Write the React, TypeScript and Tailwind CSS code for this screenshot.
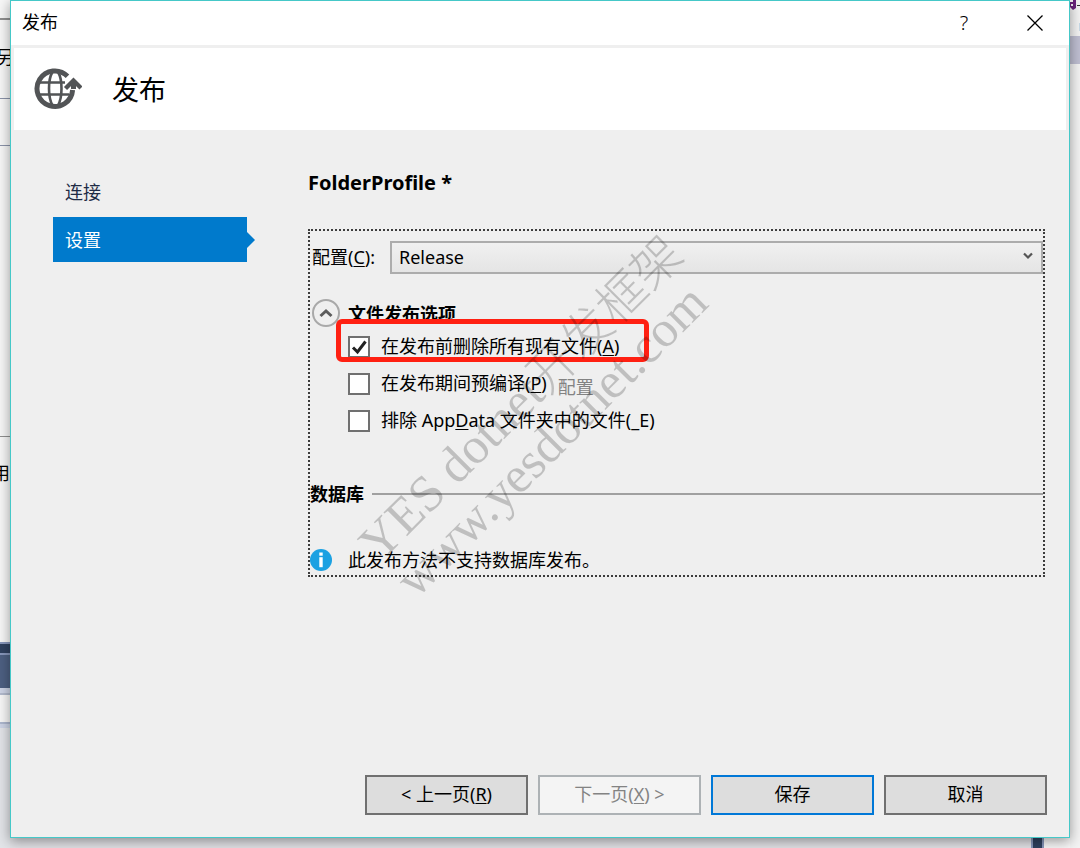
import type { ReactNode } from 'react';

const steps = [
  { label: '连接', active: false },
  { label: '设置', active: true },
];

function Key({ children }: { children: ReactNode }) {
  return <span className="underline decoration-1 underline-offset-2">{children}</span>;
}

function GlobeIcon() {
  return (
    <svg viewBox="0 0 48 42" className="w-12 h-[42px]" fill="none" stroke="#525456">
      <path d="M33.5 8.2A17.8 17.8 0 1 0 38.6 22" strokeWidth="5" />
      <path d="M18.5 4C16 8 15 14 15 20.5S16 33 18.5 37.5M24 4C26.5 8 27.5 14 27.5 20.5S26.5 33 24 37.5" strokeWidth="2.6" />
      <path d="M5 14.5H31M4 26.5H35" strokeWidth="2.6" />
      <path d="M31.5 20.5L39.5 12.5L47 20" strokeWidth="4.4" />
      <path d="M39.5 13.5V21" strokeWidth="5" />
    </svg>
  );
}

function InfoIcon() {
  return (
    <svg viewBox="0 0 22 22" className="w-[22px] h-[22px] shrink-0">
      <circle cx="11" cy="11" r="11" fill="#1ba1e2" />
      <rect x="9.3" y="3.5" width="3.4" height="3.2" fill="#fff" />
      <rect x="9.3" y="8.2" width="3.4" height="10" fill="#fff" />
    </svg>
  );
}

function CheckRow({ id, checked, children }: { id: string; checked?: boolean; children: ReactNode }) {
  return (
    <div className="flex items-center h-[37px]">
      <span className="relative flex shrink-0">
        <input
          id={id}
          type="checkbox"
          defaultChecked={checked}
          className="peer appearance-none w-[22px] h-[22px] border-2 border-[#707070] bg-white"
        />
        <svg
          viewBox="0 0 22 22"
          className="absolute inset-0 w-[22px] h-[22px] pointer-events-none invisible peer-checked:visible"
          fill="none"
          stroke="#212121"
          strokeWidth="3"
        >
          <path d="M5 11.5L9.5 16L17.5 5.5" />
        </svg>
      </span>
      <label htmlFor={id} className="pl-[11px] pb-[2px] whitespace-nowrap">
        {children}
      </label>
    </div>
  );
}

// What is visible of the editor behind the dialog
function LeftEdge() {
  return (
    <div className="w-[10px] shrink-0 overflow-hidden bg-[#f7f7f7]">
      <div className="h-[18px]" />
      <div className="h-[2px] bg-[#8f8f8f]" />
      <div className="h-[78px] flex items-center justify-end pb-1">
        <span className="shrink-0 -mr-1">另</span>
      </div>
      <div className="h-px bg-[#8b93a9]" />
      <div className="h-[46px]" />
      <div className="h-px bg-[#8b93a9]" />
      <div className="h-[290px]" />
      <div className="h-px bg-[#909090]" />
      <div className="h-[72px] flex items-center justify-end">
        <span className="shrink-0">用</span>
      </div>
      <div className="h-[133px]" />
      <div className="h-[2px] bg-[#8797bb]" />
      <div className="h-[9px] bg-[#2f415f]" />
      <div className="h-[2px] bg-[#8797bb]" />
      <div className="h-[33px] bg-[#4d6082]" />
      <div className="h-[5px] bg-[#cdd4e6]" />
      <div className="h-[2px] bg-[#b2bacd]" />
      <div className="h-[27px]" />
      <div className="h-[2px] bg-[#adb7ce]" />
      <div className="h-1 bg-[#cdd4e6]" />
      <div className="h-[120px] bg-[#e2e4e8]" />
    </div>
  );
}

function RightEdge() {
  return (
    <div className="w-[10px] shrink-0 overflow-hidden bg-[#f3f3f3]">
      <div className="h-9">
        <svg viewBox="0 0 10 36" className="w-[10px] h-9">
          <path d="M0 2H3V0H6V8L3 10L0 7Z" fill="#68217a" />
          <path d="M1 4H3V6H1Z" fill="#f3f3f3" />
          <path d="M7 5H10V6H7Z" fill="#333" />
          <path d="M9 23H10V31H9Z" fill="#c8dbe8" />
        </svg>
      </div>
      <div className="h-7 bg-[#bfbfd2]" />
    </div>
  );
}

const button = 'w-[163px] h-10 pb-[2px] border-2 text-center';

export default function App() {
  return (
    <div className="min-h-screen flex overflow-hidden text-lg leading-6 text-black font-['Noto_Sans','Noto_Sans_CJK_SC',sans-serif]">
      <LeftEdge />

      <div className="relative z-10 flex-1 min-w-0 flex flex-col">
        <div className="flex-1 flex flex-col bg-[#efefef] border border-[#45c8c8] shadow-[0_3px_12px_rgba(0,0,0,0.4)] z-10">
          <header className="h-11 flex items-center bg-white pl-[11px] pr-6">
            <span className="flex-1 pb-[2px]">发布</span>
            <button type="button" aria-label="帮助" className="w-8 mr-[45px] text-xl font-light">
              ?
            </button>
            <button type="button" aria-label="关闭" className="flex">
              <svg viewBox="0 0 20 20" className="w-5 h-5" fill="none" stroke="#000" strokeWidth="1.3">
                <path d="M2.5 2.5L17.5 17.5M17.5 2.5L2.5 17.5" />
              </svg>
            </button>
          </header>

          <div className="mx-[3px] mt-[3px] h-[82px] flex items-center gap-[30px] bg-white pl-5">
            <GlobeIcon />
            <h1 className="text-[27px] leading-10 pt-[2px]">发布</h1>
          </div>

          <div className="flex-1 flex pl-[42px] pr-6">
            <nav className="w-[194px] shrink-0 pt-10">
              {steps.map((s) =>
                s.active ? (
                  <a key={s.label} href="#settings" className="relative flex items-center h-[45px] pl-3 bg-[#007acc] text-white">
                    {s.label}
                    <svg viewBox="0 0 8 16" className="absolute left-full top-[15px] w-2 h-4" fill="#007acc">
                      <path d="M0 0L8 8L0 16Z" />
                    </svg>
                  </a>
                ) : (
                  <a key={s.label} href="#connection" className="flex items-center h-[45px] pl-3 pb-[2px] mb-[2px] text-[#1e2b45]">
                    {s.label}
                  </a>
                ),
              )}
            </nav>

            <main className="flex-1 min-w-0 ml-[61px] pt-10">
              <h2 className="text-xl leading-6 font-bold pt-px">FolderProfile *</h2>

              <section className="relative mt-[34px] h-[348px] border-2 border-dotted border-[#3c3c3c] pt-[10px]">
                <div className="flex items-center pl-[2px]">
                  <label htmlFor="config" className="w-[78px] shrink-0 pb-[2px] whitespace-nowrap">
                    配置(<Key>C</Key>):
                  </label>
                  <div className="relative flex-1">
                    <select
                      id="config"
                      className="appearance-none block w-full h-[33px] pl-[7px] pb-[2px] border-2 border-[#acacac] bg-linear-to-b from-[#f0f0f0] to-[#e5e5e5]"
                    >
                      <option>Release</option>
                    </select>
                    <svg
                      viewBox="0 0 10 8"
                      className="absolute right-[10px] top-[11px] w-[10px] h-2 pointer-events-none"
                      fill="none"
                      stroke="#555"
                      strokeWidth="2.2"
                    >
                      <path d="M1 1.5L5 5.5L9 1.5" />
                    </svg>
                  </div>
                </div>

                <div className="flex items-center mt-[25px] pl-[2px] gap-2">
                  <button
                    type="button"
                    aria-label="折叠"
                    className="w-7 h-7 flex items-center justify-center rounded-full border-2 border-[#a9a9a9]"
                  >
                    <svg viewBox="0 0 14 10" className="w-[14px] h-[10px]" fill="none" stroke="#5c5c5c" strokeWidth="3">
                      <path d="M1.5 8L7 3L12.5 8" />
                    </svg>
                  </button>
                  <h3 className="font-bold pt-[2px]">文件发布选项</h3>
                </div>

                <div className="pl-[38px] pt-[1px]">
                  <CheckRow id="delete" checked>
                    在发布前删除所有现有文件(<Key>A</Key>)
                  </CheckRow>
                  <div className="flex items-center">
                    <CheckRow id="precompile">
                      在发布期间预编译(<Key>P</Key>)
                    </CheckRow>
                    <a href="#precompile-options" className="ml-[11px] pt-[6px] text-[#838383]">
                      配置
                    </a>
                  </div>
                  <CheckRow id="exclude">
                    排除 App<Key>D</Key>ata 文件夹中的文件(_E)
                  </CheckRow>
                </div>

                <div className="flex items-center gap-2 mt-[43px]">
                  <h3 className="font-bold">数据库</h3>
                  <div className="flex-1 h-[2px] bg-[#a0a0a0]" />
                </div>

                <div className="flex items-center gap-4 mt-[42px]">
                  <InfoIcon />
                  <p>此发布方法不支持数据库发布。</p>
                </div>

                {/* highlight around the first option */}
                <div className="absolute left-[26px] top-[88px] w-[313px] h-[43px] border-[5px] border-[#ff2012] rounded-md pointer-events-none" />

                {/* watermark */}
                <div className="absolute left-[12px] top-[132px] w-[440px] -rotate-45 pointer-events-none text-[51px] leading-[51px] whitespace-nowrap text-black/20 font-['Liberation_Serif','Noto_Sans_CJK_SC',serif]">
                  <div>
                    YES dotnet<span className="font-light text-[49px]">开发框架</span>
                  </div>
                  <div>www.yesdotnet.com</div>
                </div>
              </section>
            </main>
          </div>

          <footer className="flex justify-end gap-[10px] pr-[22px] pb-[22px]">
            <button type="button" className={`${button} border-[#707070] bg-[#dddddd]`}>
              &lt; 上一页(<Key>R</Key>)
            </button>
            <button type="button" disabled className={`${button} border-[#adb2b5] bg-[#f4f4f4] text-[#838383]`}>
              下一页(<Key>X</Key>) &gt;
            </button>
            <button type="button" className={`${button} border-[#0078d7] bg-[#dddddd]`}>
              保存
            </button>
            <button type="button" className={`${button} border-[#707070] bg-[#dddddd]`}>
              取消
            </button>
          </footer>
        </div>

        <div className="h-[10px] flex justify-end bg-[#e2e2e6]">
          <div className="w-[13px] bg-[#2f415f] border-x-2 border-[#8797bb]" />
          <div className="w-[26px] bg-[#f7f7f7]" />
        </div>
      </div>

      <RightEdge />
    </div>
  );
}
